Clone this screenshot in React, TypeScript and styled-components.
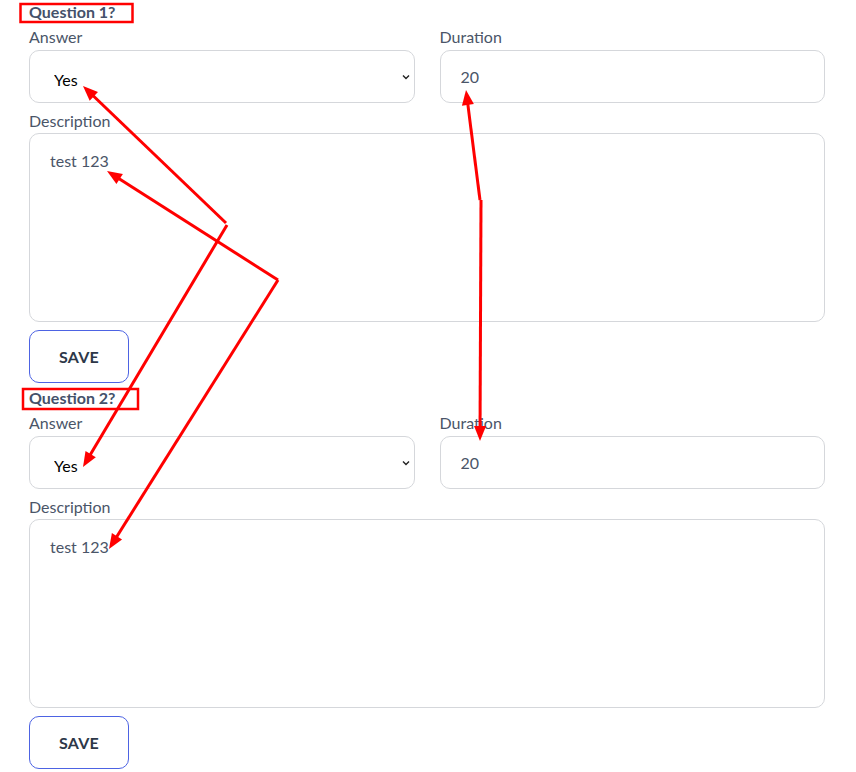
import React from "react";
import styled, { createGlobalStyle } from "styled-components";

const GlobalStyle = createGlobalStyle`
  html, body {
    margin: 0;
    padding: 0;
    background: #ffffff;
  }
  body {
    font-family: Lato, "Open Sans", "Liberation Sans", sans-serif;
  }
  * { box-sizing: border-box; }
`;

const Page = styled.div`
  position: relative;
  width: 856px;
  min-height: 772px;
  padding: 2px 31px 0 29px;
  background: #fff;
`;

const Section = styled.section`
  display: flex;
  flex-direction: column;
  margin-bottom: 5px;
`;

const Title = styled.h3`
  margin: 0;
  font-size: 16px;
  line-height: 20px;
  font-weight: 700;
  color: #44516a;
`;

const Row = styled.div`
  display: grid;
  grid-template-columns: 1fr 1fr;
  column-gap: 25px;
  margin-top: 5px;
`;

const Field = styled.div<{ $gap?: number }>`
  display: flex;
  flex-direction: column;
  margin-top: ${(p) => p.$gap ?? 0}px;
`;

const Label = styled.label<{ $space?: number }>`
  font-size: 16px;
  line-height: 20px;
  color: #4a5568;
  margin-bottom: ${(p) => p.$space ?? 3}px;
`;

const SelectWrap = styled.div`
  position: relative;
  height: 53px;
`;

const Select = styled.select`
  appearance: none;
  -webkit-appearance: none;
  width: 100%;
  height: 53px;
  padding: 6px 30px 0 24px;
  border: 1px solid #d5d7db;
  border-radius: 10px;
  background: #fff;
  font-family: Lato, "Liberation Sans", sans-serif;
  font-size: 16px;
  color: #000;
  outline: none;
`;

const Chevron = styled.svg`
  position: absolute;
  right: 5px;
  top: 24px;
  width: 8px;
  height: 6px;
  pointer-events: none;
`;

const Input = styled.input`
  width: 100%;
  height: 53px;
  padding: 0 20px;
  border: 1px solid #d5d7db;
  border-radius: 10px;
  font-family: Lato, "Liberation Sans", sans-serif;
  font-size: 16px;
  color: #4a5568;
  outline: none;
`;

const TextArea = styled.textarea`
  width: 100%;
  height: 189px;
  padding: 15px 20px;
  border: 1px solid #d5d7db;
  border-radius: 10px;
  font-family: Lato, "Liberation Sans", sans-serif;
  font-size: 16px;
  line-height: 1.5;
  color: #4a5568;
  resize: none;
  outline: none;
  display: block;
`;

const SaveButton = styled.button`
  margin-top: 8px;
  width: 100px;
  height: 53px;
  border: 1px solid #4d63e3;
  border-radius: 10px;
  background: #fff;
  font-family: Lato, "Liberation Sans", sans-serif;
  font-size: 16px;
  font-weight: 700;
  letter-spacing: 0.2px;
  text-transform: uppercase;
  color: #2d3748;
  cursor: pointer;
`;

const Marks = styled.svg`
  position: absolute;
  left: 0;
  top: 0;
  width: 856px;
  height: 772px;
  pointer-events: none;
`;

type Pt = [number, number];

// Callout arrow: a stroked shaft ending in a filled head at the tip.
function Arrow({ from, to }: { from: Pt; to: Pt }) {
  const [x1, y1] = from;
  const [x2, y2] = to;
  const dx = x2 - x1;
  const dy = y2 - y1;
  const len = Math.hypot(dx, dy);
  const ux = dx / len;
  const uy = dy / len;
  const head = 15;
  const half = 6;
  const bx = x2 - ux * head;
  const by = y2 - uy * head;
  const pts = [
    `${x2},${y2}`,
    `${bx - uy * half},${by + ux * half}`,
    `${bx + uy * half},${by - ux * half}`,
  ].join(" ");
  return (
    <g>
      <line x1={x1} y1={y1} x2={bx + ux * 2} y2={by + uy * 2} stroke="#ff0000" strokeWidth={3} />
      <polygon points={pts} fill="#ff0000" />
    </g>
  );
}

const questions = [
  { title: "Question 1?", answer: "Yes", duration: "20", description: "test 123" },
  { title: "Question 2?", answer: "Yes", duration: "20", description: "test 123" },
];

function QuestionCard({ q }: { q: (typeof questions)[number] }) {
  return (
    <Section>
      <Title>{q.title}</Title>
      <Row>
        <Field>
          <Label>Answer</Label>
          <SelectWrap>
            <Select defaultValue={q.answer}>
              <option>Yes</option>
              <option>No</option>
            </Select>
            <Chevron viewBox="0 0 8 6">
              <path d="M1 1.5 L4 4.5 L7 1.5" fill="none" stroke="#222" strokeWidth={1.4} />
            </Chevron>
          </SelectWrap>
        </Field>
        <Field>
          <Label>Duration</Label>
          <Input defaultValue={q.duration} />
        </Field>
      </Row>
      <Field $gap={8}>
        <Label $space={2}>Description</Label>
        <TextArea defaultValue={q.description} />
      </Field>
      <SaveButton>Save</SaveButton>
    </Section>
  );
}

export default function App() {
  return (
    <>
      <GlobalStyle />
      <Page>
        {questions.map((q) => (
          <QuestionCard key={q.title} q={q} />
        ))}
        <Marks viewBox="0 0 856 772">
          <rect x={20.5} y={4} width={112} height={18} fill="none" stroke="#ff0000" strokeWidth={2.5} />
          <rect x={23} y={389} width={115} height={20} fill="none" stroke="#ff0000" strokeWidth={2.5} />
          <Arrow from={[226, 223]} to={[83, 86]} />
          <Arrow from={[278, 280]} to={[107, 171]} />
          <Arrow from={[227, 225]} to={[83, 467]} />
          <Arrow from={[278, 280]} to={[109, 549]} />
          <Arrow from={[480, 200]} to={[466, 90]} />
          <Arrow from={[481, 200]} to={[480, 441]} />
        </Marks>
      </Page>
    </>
  );
}
